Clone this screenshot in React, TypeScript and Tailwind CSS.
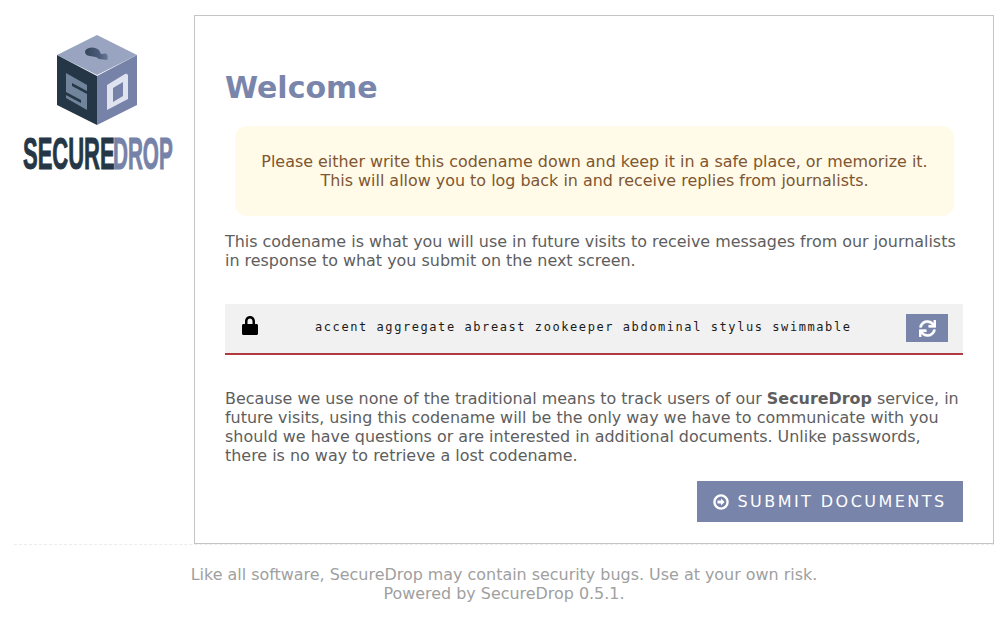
import { FaSync } from "react-icons/fa";

function Logo() {
  return (
    <svg width="152" height="138" viewBox="0 0 152 138" className="block">
      <defs>
        <linearGradient id="keyhole" x1="0" x2="1" y1="0" y2="0">
          <stop offset="0" stopColor="#34465a" />
          <stop offset="0.6" stopColor="#4a5a78" />
          <stop offset="1" stopColor="#6a7898" />
        </linearGradient>
      </defs>
      <polygon points="76,0 116,20 76,40 36,20" fill="#98a4c0" />
      <polygon points="36,20 76,41 76,90 36,70" fill="#253747" />
      <polygon points="76,41 116,20 116,70 76,90" fill="#7782a8" />
      <path d="M64 17 Q64 13 71 12.5 Q78 13 79 17 L80 19 L85 18.5 Q88 21 86 25 L78 24 Q76 21.5 72 21.5 Q64 21 64 17 Z" fill="url(#keyhole)" />
      <polygon points="45,38 66,50 66,75 45,63" fill="#70859b" />
      <polygon points="51,48 66,56 66,59 51,51" fill="#253747" />
      <polygon points="45,57 60,65 60,68 45,60" fill="#253747" />
      <path fillRule="evenodd" d="M86 50 L104 39 Q107 38 107 41 L107 64 L86 75 Z M92 53 L92 67 L102 61 L102 47 Z" fill="#dfe3ef" />
      <text transform="translate(2 134) scale(0.5 1)" fontFamily="Liberation Sans, sans-serif" fontWeight="700" fontSize="44" fill="#253747" stroke="#253747" strokeWidth="1">SECURE</text>
      <text transform="translate(92 134) scale(0.47 1)" fontFamily="Liberation Sans, sans-serif" fontWeight="700" fontSize="44" fill="#7782a8" stroke="#7782a8" strokeWidth="1">DROP</text>
    </svg>
  );
}

export default function App() {
  return (
    <div className="min-h-[618px] bg-white font-['DejaVu_Sans',sans-serif] text-[15.93px] leading-[19px] text-[#5e5e5e]">
      <div className="pt-[15px] pr-[14px] pl-[14px]">
        <div className="flex border-b border-dashed border-[#ececec]">
          <div className="w-[180px] shrink-0 pt-[20px] pl-[7px]">
            <Logo />
          </div>
          <main className="h-[529px] w-[800px] border border-[#c4c4c4] pt-[54px] pr-[30px] pl-[30px]">
            <h1 className="text-[30px] leading-[35px] font-bold text-[#7a85ac]">Welcome</h1>
            <div className="mt-[21px] mr-[9px] ml-[10px] h-[90px] rounded-[12px] bg-[#fffbe8] pt-[26px] text-center text-[#7f5630]">
              <p>Please either write this codename down and keep it in a safe place, or memorize it.</p>
              <p>This will allow you to log back in and receive replies from journalists.</p>
            </div>
            <p className="mt-[16px]">
              This codename is what you will use in future visits to receive messages from our journalists in response to what you submit on the next screen.
            </p>
            <div className="mt-[34px] flex h-[51px] items-start border-b-2 border-[#b13a42] bg-[#f1f1f1]">
              <svg viewBox="0 0 16 19" className="mt-[12px] ml-[17px] h-[19px] w-[16px] text-black" fill="currentColor">
                <path fillRule="evenodd" d="M3 8 L3 5.5 C3 2.2 5.2 0 8 0 C10.8 0 13 2.2 13 5.5 L13 8 L14.5 8 C15.4 8 16 8.6 16 9.5 L16 17.5 C16 18.4 15.4 19 14.5 19 L1.5 19 C0.6 19 0 18.4 0 17.5 L0 9.5 C0 8.6 0.6 8 1.5 8 Z M5.5 8 L10.5 8 L10.5 5.5 C10.5 3.8 9.4 2.6 8 2.6 C6.6 2.6 5.5 3.8 5.5 5.5 Z" />
              </svg>
              <span className="mt-[14px] ml-[57px] flex-1 font-['DejaVu_Sans_Mono',monospace] text-[12px] leading-[18px] tracking-[1.57px] text-[#1a1a1a]">
                accent aggregate abreast zookeeper abdominal stylus swimmable
              </span>
              <button className="mt-[10px] mr-[15px] flex h-[28px] w-[42px] items-center justify-center bg-[#7884aa] text-white">
                <FaSync className="h-[17px] w-[17px]" stroke="currentColor" strokeWidth={10} />
              </button>
            </div>
            <p className="mt-[34px]">
              Because we use none of the traditional means to track users of our <b>SecureDrop</b> service, in future visits, using this codename will be the only way we have to communicate with you should we have questions or are interested in additional documents. Unlike passwords, there is no way to retrieve a lost codename.
            </p>
            <div className="mt-[16px] flex justify-end">
              <button className="flex h-[41px] w-[266px] items-center justify-center gap-[8px] bg-[#7884aa] text-[16px] tracking-[2.45px] text-white">
                <svg viewBox="0 0 16 16" className="h-[16px] w-[16px]" fill="none">
                  <circle cx="8" cy="8" r="6.6" stroke="currentColor" strokeWidth="2.4" />
                  <path d="M8 4.6 L11.6 8 L8 11.4 L8 9.4 L4.4 9.4 L4.4 6.6 L8 6.6 Z" fill="currentColor" />
                </svg>
                SUBMIT DOCUMENTS
              </button>
            </div>
          </main>
        </div>
      </div>
      <footer className="mt-[20px] text-center text-[#a0a0a0]">
        <p>Like all software, SecureDrop may contain security bugs. Use at your own risk.</p>
        <p>Powered by SecureDrop 0.5.1.</p>
      </footer>
    </div>
  );
}
